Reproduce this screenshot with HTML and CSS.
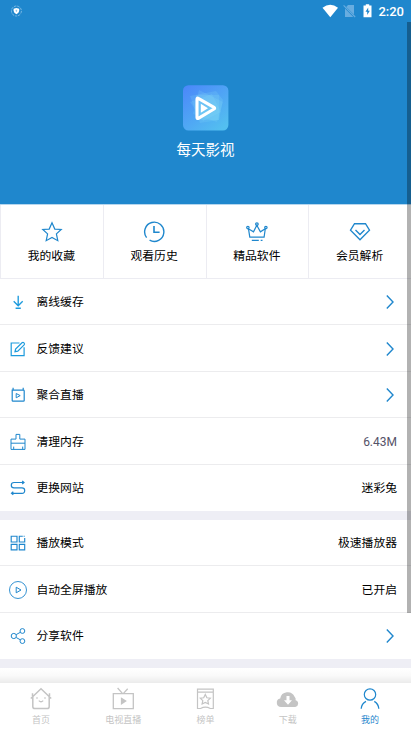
FILE: index.html
```html
<!DOCTYPE html>
<html lang="zh-CN">
<head>
<meta charset="utf-8">
<title>我的</title>
<link rel="stylesheet" href="styles.css">
</head>
<body>
<div class="app">
  <header class="hero">
    <div class="status">
      <svg class="shield" width="12" height="12" viewBox="0 0 12 12"><circle cx="6.4" cy="6" r="5" fill="none" stroke="#8fc4e8" stroke-width=".8" stroke-dasharray="2.5 .9"/><path d="M6.4 2.9L9.2 3.8V6Q9 8 6.4 9.3Q3.8 8 3.6 6V3.8Z" fill="#fff"/><path d="M5.6 5.2H7.2M6.4 5.2V7" stroke="#5ea9db" stroke-width=".6"/></svg>
      <div class="signals">
        <svg width="17" height="14" viewBox="0 0 17 14"><path d="M.5 3.7Q8.2-2.3 16 3.7L8.3 13.2Z" fill="#fff"/></svg>
        <svg width="13" height="14" viewBox="0 0 13 14"><path d="M5 1H11V10.5L3.2 3ZM2 4.6L10.3 13H2Z" fill="#68ade0"/><path d="M.6 1.4L12.2 13" stroke="#68ade0" stroke-width="1.1"/></svg>
        <svg width="9" height="14" viewBox="0 0 9 14"><path d="M.5 1.6H2.8V.2H6.2V1.6H8.5V13.2H.5Z" fill="#fff"/><path d="M5.2 3.5L2.5 7.8H4.2V11L6.8 6.8H5.2Z" fill="#1f87cd"/></svg>
        <span class="clock">2:20</span>
      </div>
    </div>
    <svg class="logo" width="46" height="46" viewBox="0 0 46 46">
      <defs><linearGradient id="logo-fill" x1="0" y1="0" x2=".8" y2="1"><stop offset="0" stop-color="#4b86fa"/><stop offset="1" stop-color="#53bff0"/></linearGradient></defs>
      <rect x="0" y=".2" width="45.4" height="45.4" rx="5.5" fill="url(#logo-fill)"/>
      <g fill="#8ee6fa" fill-opacity=".16"><path d="M7 11L33 6L40 15L36 35L17 38Z"/><path d="M16 5L40 17L34 37L10 29Z"/><path d="M7 17L29 9L38 27L20 36Z"/><rect x="13" y="10" width="23" height="25"/></g>
      <path d="M15.3 13.3Q14 12.5 14 14V32.5Q14 34 15.3 33.3L31 24Q32.3 23.2 31 22.4Z" fill="none" stroke="#fff" stroke-width="3.1" stroke-linejoin="round"/>
      <path d="M17.8 18.7V27.8L25 23.2Z" fill="#fff"/>
    </svg>
    <h1 class="name">每天影视</h1>
  </header>

  <nav class="shortcuts">
    <a class="shortcut"><svg width="22" height="22" viewBox="0 0 22 22"><path d="M11 1.8L13.8 8.1L20.2 8.5L15.4 12.9L16.8 19.7L11 16.5L5.2 19.7L6.6 12.9L1.8 8.5L8.2 8.1Z"/></svg><span>我的收藏</span></a>
    <a class="shortcut"><svg width="22" height="22" viewBox="0 0 22 22"><path d="M3.6 16.6A9.6 9.6 0 1 1 6.6 19.2" stroke-width="1.4"/><path d="M11 5V11.2H16.6" stroke-width="1.6"/></svg><span>观看历史</span></a>
    <a class="shortcut"><svg width="22" height="22" viewBox="0 0 22 22"><path d="M3.8 16.2L2.5 7.8L7.5 10.8L10.8 4.2L14.4 10.8L19.3 7.8L18.1 16.2ZM5.8 19.4H12.8M14.7 19.4H16.5"/><circle cx="1.9" cy="6.6" r="1.2"/><circle cx="10.9" cy="3.1" r="1.3"/><circle cx="19.9" cy="6.6" r="1.2"/></svg><span>精品软件</span></a>
    <a class="shortcut"><svg width="22" height="22" viewBox="0 0 22 22"><path d="M5.5 2.7H16.5L20.5 9.1L11 18.8L1.5 9.1Z" stroke-width="1.35"/><path d="M6.5 9L11 13.5L15.5 9" stroke-width="1.35"/></svg><span>会员解析</span></a>
  </nav>

  <section class="group">
    <div class="row"><svg class="icon" viewBox="0 0 18 18"><path d="M9.2 2.7V12.6M4.7 8.3L9.2 12.8L13.7 8.3M6.6 15.2H11.8" stroke="#1d9bdd" stroke-width="1.35"/></svg><span class="label">离线缓存</span><svg class="chevron" viewBox="0 0 8 14"><path d="M.8 .5L7 7L.8 13.5"/></svg></div>
    <div class="row"><svg class="icon" viewBox="0 0 18 18"><path d="M10.5 3H2.2V15.6H15.1V7.3" stroke="#1d9bdd" stroke-width="1.2"/><path d="M6 11.7L6.6 9L13 2.7Q14 1.8 15 2.8T15.1 4.8L8.8 11.1Z" stroke="#1d9bdd" stroke-width="1.2"/></svg><span class="label">反馈建议</span><svg class="chevron" viewBox="0 0 8 14"><path d="M.8 .5L7 7L.8 13.5"/></svg></div>
    <div class="row"><svg class="icon" viewBox="0 0 18 18"><path d="M3.2 4.1H14.4Q15.2 4.1 15.2 4.9V14.4Q15.2 15.2 14.4 15.2H4Q3.2 15.2 3.2 14.4ZM4.1 1.8V4M14.2 1.8V4" stroke-width="1.2"/><path d="M7.2 7.5V11.8L11.2 9.6Z"/></svg><span class="label">聚合直播</span><svg class="chevron" viewBox="0 0 8 14"><path d="M.8 .5L7 7L.8 13.5"/></svg></div>
    <div class="row"><svg class="icon" viewBox="0 0 18 18"><path d="M2 16.4V6.1H7V1.4H10.8V6.1H16V16.4ZM2 10.2H16M4.7 13.6V16.4M13.7 13.6V16.4"/></svg><span class="label">清理内存</span><span class="value size">6.43M</span></div>
    <div class="row"><svg class="icon" viewBox="0 0 18 18"><path d="M14.8 3.5H5Q2.3 3.5 2.3 6.2T5 8.9H13Q15.7 8.9 15.7 11.6T13 14.3H3M13.2 2L15 3.5L13.2 5M4.3 12.8L2.5 14.3L4.3 15.8" stroke-width="1.2"/></svg><span class="label">更换网站</span><span class="value">迷彩兔</span></div>
  </section>

  <section class="group playback">
    <div class="row"><svg class="icon" viewBox="0 0 18 18"><path d="M2.2 2.2H8V8H2.2ZM15.7 4V8H10.3V2.2H13.8M14.6 2.2H15.7M2.2 10.4H8V15.9H2.2ZM10.3 10.4H15.7V15.9H10.3Z" stroke-width="1.15"/></svg><span class="label">播放模式</span><span class="value">极速播放器</span></div>
    <div class="row"><svg class="icon" viewBox="0 0 18 18"><circle cx="9" cy="9" r="8.5" stroke-width=".9"/><path d="M7.2 6.2V11.8L12 9Z"/></svg><span class="label">自动全屏播放</span><span class="value">已开启</span></div>
    <div class="row"><svg class="icon" viewBox="0 0 18 18"><circle cx="4.8" cy="9" r="2.6"/><circle cx="13.4" cy="4" r="2.4"/><circle cx="13.4" cy="14.1" r="2.4"/><path d="M7.2 7.6L11.3 5.3M7.2 10.5L11.3 12.8"/></svg><span class="label">分享软件</span><svg class="chevron" viewBox="0 0 8 14"><path d="M.8 .5L7 7L.8 13.5"/></svg></div>
  </section>

  <div class="fade"></div>
  <footer class="tabs">
    <a class="tab"><svg width="24" height="24" viewBox="0 0 24 24"><path d="M1.8 11.5L12 1.8L22.2 11.5M3.8 10V19.5Q3.8 21.6 5.9 21.6H18.1Q20.2 21.6 20.2 19.5V10M3.5 9V6.3M20.5 9V6.3" stroke-width="1.5"/><path d="M8 10.3V11.8M16 10.3V11.8M9.8 13.6Q12 15.9 14.2 13.6" stroke-width="1.3"/></svg><span>首页</span></a>
    <a class="tab"><svg width="24" height="24" viewBox="0 0 24 24"><path d="M2.3 6.7H22.3V21.6H2.3ZM6.6 1L11.4 6.4M16.7 1.8L12.5 6.4" stroke-width="1.3"/><path d="M9.9 10.2V18L15.9 14.1Z" fill="#c4c4c4" stroke="none"/></svg><span>电视直播</span></a>
    <a class="tab"><svg width="24" height="24" viewBox="0 0 24 24"><path d="M4.5 2.2H20.3V21.5H17.3Q12.3 18.9 7.6 21.5H4.5ZM4.5 5.2H20.3"/><path d="M12.3 7.5L13.9 10.8L17.3 11.2L14.8 13.6L15.5 17L12.3 15.4L9.1 17L9.8 13.6L7.3 11.2L10.7 10.8Z"/></svg><span>榜单</span></a>
    <a class="tab"><svg width="24" height="24" viewBox="0 0 24 24"><path d="M5.2 20A4.3 4.3 0 0 1 4.2 11.5A7.6 7.6 0 0 1 18.6 9.8A3.6 3.6 0 0 1 19.6 13.2A3.5 3.5 0 0 1 19.3 20Z" fill="#c4c4c4" stroke="none"/><path d="M10.5 9H13.5V13.2H16L12 17.8L8 13.2H10.5Z" fill="#fff" stroke="none"/></svg><span>下载</span></a>
    <a class="tab active"><svg width="24" height="24" viewBox="0 0 24 24"><circle cx="12" cy="7.5" r="5.7"/><path d="M3.2 21.7Q3.5 16.8 8 14.4M16.3 14.4Q20.5 17 20.8 21.7" stroke-width="1.3"/></svg><span>我的</span></a>
  </footer>
  <div class="scrollbar"></div>
</div>
</body>
</html>
```
FILE: styles.css
```css
* { box-sizing: border-box; }

body {
  margin: 0;
  background: #fff;
  color: #000;
  font-family: Roboto, "Noto Sans CJK SC", sans-serif;
}

.app {
  position: relative;
  display: flex;
  flex-direction: column;
  width: 411px;
  height: 730px;
  overflow: hidden;
}

svg {
  display: block;
  flex: none;
  fill: none;
}

.hero {
  display: flex;
  flex: none;
  flex-direction: column;
  align-items: center;
  height: 204px;
  background: #1f87cd;
  color: #fff;
}

.status {
  display: flex;
  justify-content: space-between;
  align-items: center;
  width: 100%;
  height: 22px;
  padding: 0 7px 0 10px;
}

.signals {
  display: flex;
  align-items: center;
}

.signals svg:nth-child(2) { margin-left: 4.5px; }
.signals svg:nth-child(3) { margin-left: 7px; }

.clock {
  margin-left: 6px;
  padding-top: 1px;
  font-size: 13px;
  font-weight: 500;
  line-height: 22px;
}

.logo { margin-top: 63px; }

.name {
  margin: 9px 0 0;
  font-size: 14.5px;
  font-weight: 400;
  line-height: 22px;
}

.shortcuts {
  display: grid;
  flex: none;
  grid-template-columns: repeat(4, 1fr);
  height: 75px;
  border-top: 1px solid #b5d6ee;
  border-bottom: 1px solid #ececf2;
}

.shortcut {
  display: flex;
  flex-direction: column;
  align-items: center;
  padding-top: 16px;
  border-left: 1px solid #ececf2;
  font-size: 11.8px;
  line-height: 18px;
}

.shortcut span { margin-right: 1px; }

.shortcut svg {
  margin-right: .5px;
  margin-bottom: 4px;
  stroke: #1f87cd;
  stroke-width: 1.2;
}

.group {
  flex: none;
  border-bottom: 9px solid #eeeef5;
}

.row {
  display: flex;
  align-items: center;
  height: 46.45px;
  padding: 1.2px 14px 0 9.3px;
  border-bottom: 1px solid #ececee;
  font-size: 11.8px;
  line-height: 18px;
}

.playback .row { height: 46.3px; }
.row:last-child { border-bottom: 0; }
.group .row:last-child { padding-top: 0; }

.icon {
  width: 18px;
  height: 18px;
  margin-right: 9.2px;
  stroke: #1f87cd;
  stroke-width: 1;
}

.label { flex: 1; }

.size {
  color: #555268;
  font-size: 12px;
}

.chevron {
  width: 8px;
  height: 14px;
  margin-right: 3px;
  stroke: #1f87cd;
  stroke-width: 1.4;
}

.fade {
  flex: 1;
  background: linear-gradient(#fff, #fafafa 50%, #ebebeb);
}

.tabs {
  display: grid;
  grid-template-columns: repeat(5, 1fr);
  flex: none;
  height: 47px;
  background: #fff;
}

.tab {
  display: flex;
  flex-direction: column;
  align-items: center;
  padding-top: 4px;
  color: #c4c4c4;
  font-size: 9px;
  line-height: 14px;
}

.tab svg {
  margin-bottom: 2px;
  stroke: #c4c4c4;
  stroke-width: 1.2;
}

.active { color: #1f87cd; }
.active svg { stroke: #1f87cd; }

.scrollbar {
  position: absolute;
  top: 22px;
  right: 0;
  width: 4px;
  height: 591px;
  background: rgba(0, 0, 0, .3);
}
```
